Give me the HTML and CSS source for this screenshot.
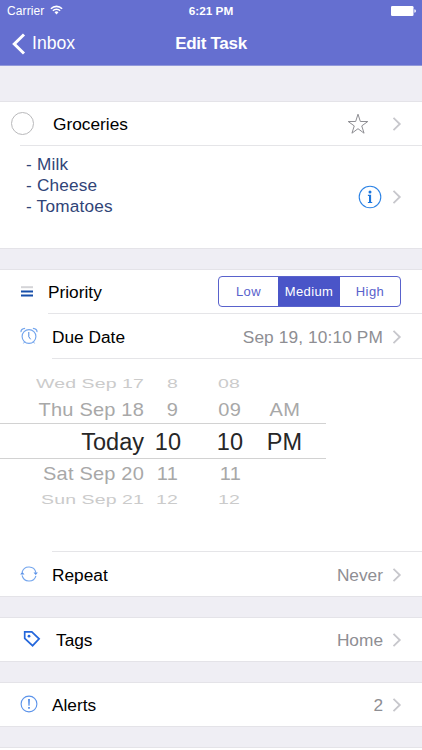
FILE: index.html
```html
<!DOCTYPE html>
<html lang="en">
<head>
<meta charset="utf-8">
<title>Edit Task</title>
<link rel="stylesheet" href="styles.css">
</head>
<body>
<svg class="defs" width="0" height="0"><symbol id="chev" viewBox="0 0 10 16"><path d="M1.5 1.8 7.8 8l-6.3 6.2" fill="none" stroke="#c7c7cc" stroke-width="1.8"/></symbol></svg>
<header class="header">
  <div class="status">
    <div class="carrier"><span>Carrier</span>
      <svg width="13" height="10" viewBox="0 0 13 10" fill="none" stroke="#fff" stroke-width="1.6"><path d="M.9 3.7a8 8 0 0 1 11.2 0M2.9 5.8a5.1 5.1 0 0 1 7.2 0"/><path d="M4.5 7.2a2.9 2.9 0 0 1 4 0L6.5 9.4z" fill="#fff" stroke="none"/></svg>
    </div>
    <b>6:21 PM</b>
    <svg class="battery" width="26" height="10" viewBox="0 0 26 10" fill="#fff"><rect width="22.5" height="10" rx="1.3"/><path d="M23.4 3.2q1.5.3 1.5 1.8t-1.5 1.8z"/></svg>
  </div>
  <nav class="nav">
    <a class="back"><svg width="14" height="22" viewBox="0 0 14 22"><path d="M12 1.5 2.3 11l9.7 9.5" fill="none" stroke="#fff" stroke-width="3"/></svg><span>Inbox</span></a>
    <h1>Edit Task</h1><span></span>
  </nav>
</header>
<main>
  <section class="group">
    <div class="row task">
      <span class="check"></span><span class="label">Groceries</span>
      <svg class="star" width="22" height="22" viewBox="0 0 22 22"><path d="m11 1.2 2.35 7.3h7.45l-6.05 4.4 2.3 7.3L11 15.7l-6.05 4.5 2.3-7.3L1.2 8.5h7.45z" fill="none" stroke="#8e8e93" stroke-width="1"/></svg>
      <svg class="chev"><use href="#chev"/></svg>
    </div>
    <div class="note">
      <p>- Milk<br>- Cheese<br>- Tomatoes</p>
      <svg class="info" width="24" height="24" viewBox="0 0 24 24"><circle cx="12" cy="12" r="10.8" fill="none" stroke="#2d83e5" stroke-width="1.1"/><circle cx="12" cy="6.9" r="1.5" fill="#1c76dd"/><path d="M9.9 9.8h3.2v7.1h1.1v1H9.9v-1H11v-6H9.9z" fill="#1c76dd"/></svg>
      <svg class="chev"><use href="#chev"/></svg>
    </div>
  </section>
  <section class="group second">
    <div class="row priority">
      <svg class="icon bars" width="12" height="12"><path d="M0 1.2h12" stroke="#d4d4d7" stroke-width="2"/><path d="M0 5.5h12M0 9.5h12" stroke="#174ea9" stroke-width="2"/></svg>
      <span class="label">Priority</span>
      <div class="segments"><span>Low</span><span class="on">Medium</span><span>High</span></div>
    </div>
    <div class="row due">
      <svg class="icon" width="18" height="18" viewBox="0 0 18 18" fill="none" stroke="#73a5ed"><circle cx="9" cy="9.5" r="6.9" stroke-width="1.15"/><path d="M8.8 5v4.8l1.8 2.5" stroke="#4c88df"/><path d="M1 5.1Q.8 1.8 5.1 1.4M12.9 1.4Q17.2 1.8 17 5.1" stroke-width="1.2"/><path d="m4.7 14.8-1.2 1.6M13.3 14.8l1.2 1.6"/></svg>
      <span class="label">Due Date</span><span class="value date">Sep 19, 10:10 PM</span><svg class="chev"><use href="#chev"/></svg>
    </div>
    <div class="picker">
      <div class="prow far top"><span>Wed Sep 17</span><span>8</span><span>08</span><span></span></div>
      <div class="prow near top"><span>Thu Sep 18</span><span>9</span><span>09</span><span>AM</span></div>
      <div class="prow current"><span>Today</span><span>10</span><span>10</span><span>PM</span></div>
      <div class="prow near"><span>Sat Sep 20</span><span>11</span><span>11</span><span></span></div>
      <div class="prow far"><span>Sun Sep 21</span><span>12</span><span>12</span><span></span></div>
    </div>
    <div class="row repeat">
      <svg class="icon" width="18" height="18" viewBox="0 0 18 18" fill="none" stroke="#73a5ed"><path d="M2.1 7.2A7.1 7.1 0 0 1 15.9 7.6M15.9 10.8A7.1 7.1 0 0 1 2.1 10.4" stroke-width="1.15"/><path d="m.2 9.4 2-2.6 2.3 2.6zM13.5 7.4h4.4l-2.2 2.7z" fill="#5b92e8" stroke="none"/></svg>
      <span class="label">Repeat</span><span class="value">Never</span><svg class="chev"><use href="#chev"/></svg>
    </div>
  </section>
  <section class="group small">
    <div class="row tags">
      <svg class="icon" width="18" height="18" viewBox="0 0 18 18"><path d="M1.7 1.9h7.1l7.3 7-6.5 6.8-7.9-7.4z" fill="none" stroke="#2467dc" stroke-width="1.7"/><circle cx="6" cy="6.2" r="1.4" fill="#2467dc"/></svg>
      <span class="label">Tags</span><span class="value">Home</span><svg class="chev"><use href="#chev"/></svg>
    </div>
  </section>
  <section class="group small">
    <div class="row alerts">
      <svg class="icon" width="18" height="18" viewBox="0 0 18 18"><circle cx="9" cy="9" r="7.9" fill="none" stroke="#5b93ea" stroke-width="1.1"/><path d="M8 4h2l-.4 6.8H8.4zM8.1 12.1h1.8v1.7H8.1z" fill="#5b93ea"/></svg>
      <span class="label">Alerts</span><span class="value">2</span><svg class="chev"><use href="#chev"/></svg>
    </div>
  </section>
  <section class="group last"></section>
</main>
</body>
</html>
```
FILE: styles.css
```css
* { box-sizing: border-box; }
body { margin: 0; width: 422px; height: 750px; overflow: hidden; background: #efeef4; color: #000; font: 17.3px "Liberation Sans", Arial, sans-serif; }
svg { display: block; flex: none; }
.defs { position: absolute; }
.header { height: 66px; background: #656fd0; border-bottom: 1px solid #9299da; color: #fff; }
.status { display: grid; grid-template-columns: 1fr auto 1fr; align-items: center; height: 22px; padding: 0 6px 0 7px; font-size: 12px; }
.status b { margin-right: 1px; font-size: 11.8px; }
.carrier { display: flex; gap: 6px; align-items: center; letter-spacing: .1px; }
.carrier svg { margin-top: -2px; }
.battery { justify-self: end; margin-right: -1px; }
.nav { display: grid; grid-template-columns: 1fr auto 1fr; align-items: center; height: 43px; padding: 0 12px; }
.back { display: flex; align-items: center; gap: 6px; font-size: 17.6px; }
.nav h1 { margin: 0; font-size: 17px; letter-spacing: -.3px; }
.group { margin-top: 35px; background: #fff; border-top: 1px solid #e4e3e8; border-bottom: 1px solid #e4e3e8; }
.second { margin-top: 20px; }
.small { margin-top: 20px; }
.last { margin-top: 20px; height: 10px; }
.row { position: relative; display: flex; align-items: center; height: 44px; padding-right: 20px; }
.task::after, .priority::after, .due::after { content: ""; position: absolute; left: 20px; right: 0; bottom: 0; height: 1px; background: #e5e5e8; }
.priority::after { left: 48px; }
.due::after { left: 52px; }
.label { white-space: nowrap; }
.value { margin-left: auto; color: #8e8e93; white-space: nowrap; }
.date { letter-spacing: .12px; }
.chev { width: 10px; height: 16px; margin-left: 9px; margin-top: -1px; }
.note .chev { margin-left: 10px; margin-top: 0; }
.check { width: 23px; height: 23px; margin: -1px 19px 0 11px; border: 1px solid #b9b9bb; border-radius: 50%; }
.star { margin-left: auto; margin-right: 14px; }
.note { display: flex; align-items: center; height: 102px; padding: 0 20px 0 26px; }
.note p { margin: -23px auto 0 0; color: #304477; font-size: 17.2px; letter-spacing: .2px; line-height: 20.7px; }
.icon { margin: -3px 14px 0 20px; }
.bars { margin: -1px 15px 0 21px; }
.segments { display: grid; grid-template-columns: 59px 62px 60px; width: 183px; height: 31px; margin-left: auto; margin-top: -1px; border: 1px solid #5962cc; border-radius: 4px; overflow: hidden; color: #5962cc; font-size: 13px; letter-spacing: .4px; line-height: 30px; text-align: center; }
.priority { padding-right: 21px; }
.segments .on { background: #4a55c8; color: #fff; }
.due, .tags, .alerts { padding-top: 1px; }
.due { height: 45px; }
.picker { height: 192px; padding-top: 11px; color: #272727; }
.prow { display: grid; grid-template-columns: 144px 37px 62px 83px; width: 326px; height: 26px; line-height: 26px; white-space: nowrap; }
.prow span { text-align: right; transform-origin: right center; }
.prow span:nth-child(4) { padding-right: 24px; }
.near { color: #a8a8a8; font-size: 20px; letter-spacing: .2px; }
.near span { transform: scaleY(.95); }
.near span:nth-child(2), .far span:nth-child(2) { padding-right: 3px; }
.near span:nth-child(3) { padding-right: 2px; }
.far span:nth-child(3) { padding-right: 3px; }
.near span:nth-child(4) { padding-right: 26px; }
.far { color: #cbcbcb; font-size: 19.5px; letter-spacing: .1px; }
.far span { transform: scaleY(.66); }
.near.top { height: 27px; }
.current { height: 36px; line-height: 36px; font-size: 23.5px; border-top: 1px solid #d2d2d2; border-bottom: 1px solid #d2d2d2; }
.current + .near { height: 26px; margin-top: 1px; }
.repeat { height: 45px; padding-top: 2px; border-top: 1px solid transparent; }
.repeat::before { content: ""; position: absolute; left: 52px; right: 0; top: -1px; height: 1px; background: #e5e5e8; }
.small .row { height: 43px; }
.tags .icon { margin: -3px 15px 0 23px; }
.alerts .icon { margin-top: -3px; }
```
